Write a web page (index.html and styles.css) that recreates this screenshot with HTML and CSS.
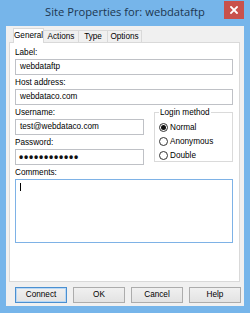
FILE: index.html
```html
<!DOCTYPE html>
<html>
<head>
<meta charset="utf-8">
<link rel="stylesheet" href="styles.css">
</head>
<body>
<div class="window">
  <div class="titlebar">
    <span></span>
    <div class="title">Site Properties for: webdataftp</div>
    <div class="close"><svg width="8" height="8" viewBox="0 0 8 8"><path d="M1 1L7 7M7 1L1 7" stroke="#fff" stroke-width="1.8" stroke-linecap="square"/></svg></div>
  </div>
  <div class="client">
    <div class="tabs">
      <div class="tab tab-active">General</div>
      <div class="tab tab-actions">Actions</div>
      <div class="tab tab-type">Type</div>
      <div class="tab tab-options">Options</div>
    </div>
    <div class="panel">
      <div class="field">
        <div class="label">Label:</div>
        <div class="box">webdataftp</div>
      </div>
      <div class="field">
        <div class="label">Host address:</div>
        <div class="box">webdataco.com</div>
      </div>
      <div class="split">
        <div class="leftcol">
          <div class="field">
            <div class="label">Username:</div>
            <div class="box">test@webdataco.com</div>
          </div>
          <div class="field">
            <div class="label">Password:</div>
            <div class="box dots">••••••••••••</div>
          </div>
        </div>
        <fieldset class="group">
          <legend>Login method</legend>
          <div class="radio-row"><span class="radio checked"></span><span>Normal</span></div>
          <div class="radio-row"><span class="radio"></span><span>Anonymous</span></div>
          <div class="radio-row"><span class="radio"></span><span>Double</span></div>
        </fieldset>
      </div>
      <div class="field">
        <div class="label">Comments:</div>
        <div class="box textarea"><span class="caret"></span></div>
      </div>
    </div>
    <div class="buttons">
      <div class="btn btn-default">Connect</div>
      <div class="btn">OK</div>
      <div class="btn">Cancel</div>
      <div class="btn">Help</div>
    </div>
  </div>
</div>
</body>
</html>
```
FILE: styles.css
```css
* { box-sizing: border-box; }
html, body {
  margin: 0;
  padding: 0;
  width: 250px;
  height: 313px;
  overflow: hidden;
  background: #76b5ea;
}
body {
  font-family: "Liberation Sans", Arial, sans-serif;
  font-size: 8.2px;
  color: #000;
}
.window {
  width: 250px;
  height: 313px;
}
.titlebar {
  height: 26px;
  display: grid;
  grid-template-columns: 1fr auto 1fr;
  align-items: start;
}
.title {
  font-family: "Open Sans", "Noto Sans", sans-serif;
  font-size: 11.2px;
  color: #1c3550;
  line-height: 14px;
  padding-top: 5px;
  white-space: nowrap;
}
.close {
  justify-self: end;
  margin-right: 6px;
  margin-top: 1px;
  width: 20px;
  height: 18px;
  background: #c9514c;
  display: flex;
  align-items: center;
  justify-content: center;
}
.close svg { display: block; }
.client {
  margin: 0 6px;
  height: 280px;
  background: #f0f0f0;
  padding-top: 2px;
}
.tabs {
  display: flex;
  align-items: flex-end;
  height: 14px;
  padding-left: 7px;
  position: relative;
  z-index: 1;
}
.tab {
  height: 12px;
  line-height: 11px;
  text-align: center;
  border: 1px solid #d9d9d9;
  border-bottom: none;
  background: #f0f0f0;
  margin-left: -1px;
}
.tab-active {
  height: 15px;
  margin-bottom: -1px;
  background: #fff;
  width: 31px;
  margin-left: 0;
  line-height: 14px;
}
.tab-actions { width: 36px; }
.tab-type { width: 30px; }
.tab-options { width: 35px; }
.panel {
  margin-left: 3px;
  width: 231px;
  height: 240px;
  background: #fff;
  border: 1px solid #d9d9d9;
  padding: 4px 6px 0 5px;
}
.field { margin-bottom: 2px; }
.label {
  line-height: 11px;
  height: 11px;
  margin-bottom: 1px;
  white-space: nowrap;
}
.box {
  height: 16px;
  border: 1px solid #bfc1c6;
  background: #fff;
  line-height: 14px;
  padding-left: 4px;
  white-space: nowrap;
}
.dots {
  font-size: 12px;
  font-weight: bold;
  letter-spacing: 0.8px;
  color: #111;
  line-height: 14px;
  padding-left: 3px;
}
.split {
  display: flex;
  justify-content: space-between;
}
.leftcol { width: 129px; }
.group {
  margin: 0;
  width: 79px;
  height: 55px;
  border: 1px solid #dadada;
  padding: 2px 0 0 4px;
  min-width: 0;
}
.group legend {
  padding: 0 1px;
  margin-left: 0;
  line-height: 11px;
  font-size: 8.2px;
}
.radio-row {
  display: flex;
  align-items: center;
  height: 14px;
  white-space: nowrap;
}
.radio {
  width: 9px;
  height: 9px;
  border: 1px solid #333;
  border-radius: 50%;
  background: #fff;
  margin-right: 2px;
  display: flex;
  align-items: center;
  justify-content: center;
}
.radio.checked::after {
  content: "";
  width: 5px;
  height: 5px;
  border-radius: 50%;
  background: #111;
}
.textarea {
  height: 64px;
  border-color: #7eb2e6;
  padding: 3px 0 0 4px;
}
.caret {
  display: block;
  width: 1px;
  height: 8px;
  background: #000;
}
.buttons {
  display: flex;
  gap: 6px;
  margin-top: 5px;
  padding-left: 9px;
}
.btn {
  width: 52px;
  height: 16px;
  border: 1px solid #acacac;
  background: linear-gradient(#f0f0f0, #e3e3e3);
  text-align: center;
  line-height: 14px;
}
.btn-default {
  border-color: #4a8fd0;
  box-shadow: inset 0 0 0 1px #b9d8f5;
}
```
